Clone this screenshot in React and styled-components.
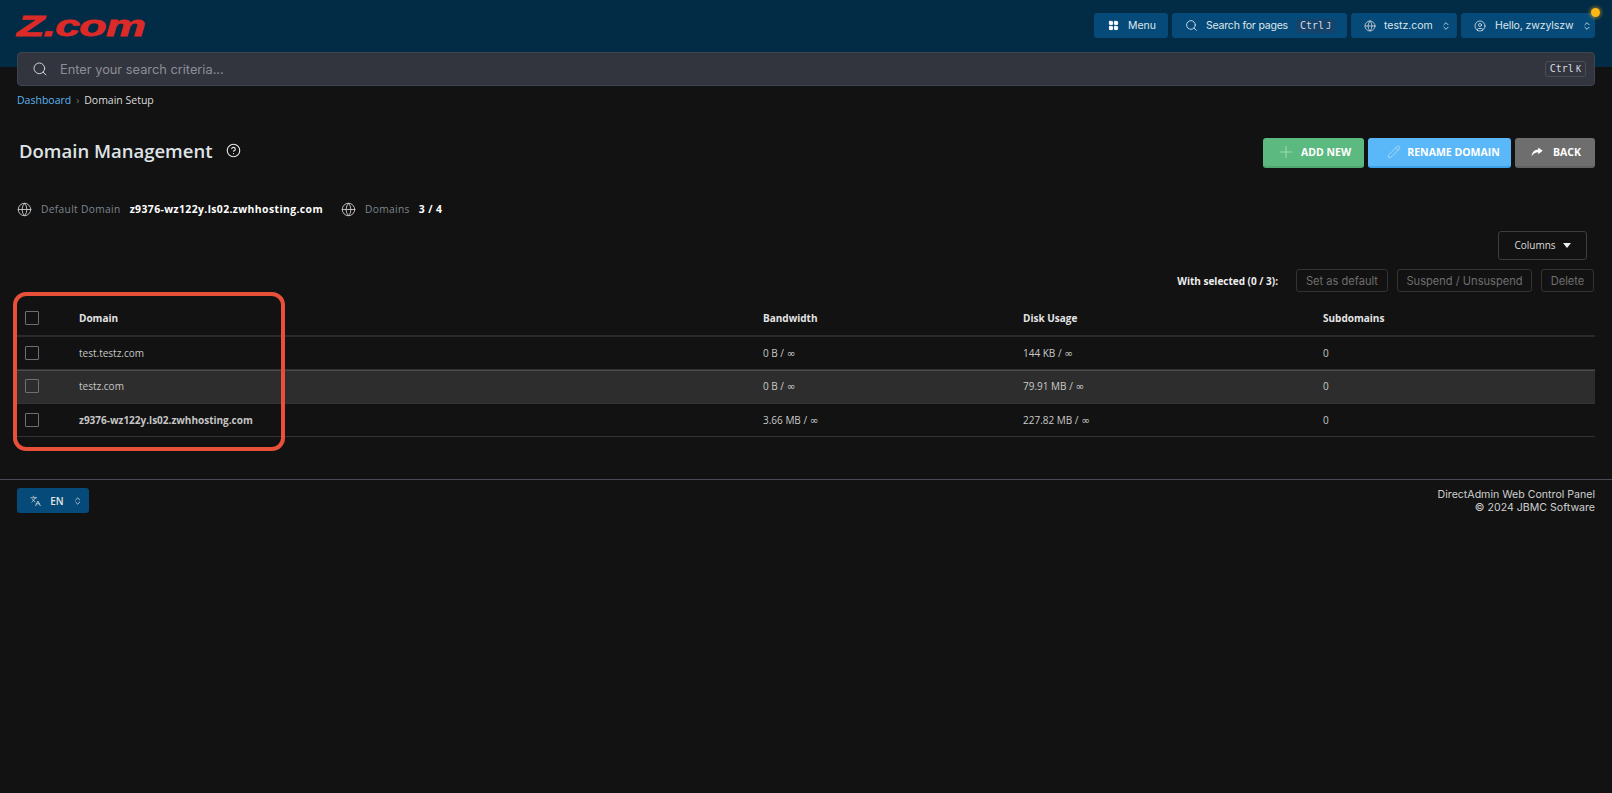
import React from "react";
import styled, { createGlobalStyle } from "styled-components";
import { LayoutGrid, Search, Globe, CircleUser, ChevronsUpDown, Plus, Pencil, CircleHelp, Languages } from "lucide-react";

const GlobalStyle = createGlobalStyle`
  html, body { margin: 0; padding: 0; background: #121212; }
  body { font-family: "Open Sans", sans-serif; color: #e4e4e4; }
  * { box-sizing: border-box; }
`;

const Page = styled.div`
  position: relative;
  min-height: 793px;
  background: #121212;
`;

const HeaderBand = styled.header`
  height: 67px;
  background: #022b46;
  padding: 13px 17px 0;
  display: flex;
  justify-content: space-between;
  align-items: flex-start;
`;

const Logo = styled.div`
  font-family: "Liberation Sans", sans-serif;
  font-weight: 700;
  font-style: italic;
  font-size: 30px;
  line-height: 26px;
  letter-spacing: -0.5px;
  color: #db2a27;
  transform: scaleX(1.49);
  transform-origin: left center;
  -webkit-text-stroke: 0.8px #db2a27;
`;

const TopNav = styled.nav`
  position: relative;
  display: flex;
  gap: 4px;
`;

const NavButton = styled.div`
  height: 25px;
  width: ${(p) => p.$w}px;
  padding: 0 7px 0 ${(p) => p.$pl || 13}px;
  display: flex;
  align-items: center;
  gap: ${(p) => p.$gap || 9}px;
  background: #054a78;
  border-radius: 3px;
  font-size: 10.5px;
  color: #dfe6ec;
  font-family: "Inter", sans-serif;
  white-space: nowrap;
  svg { flex: none; }
`;

const NavLabel = styled.span`
  letter-spacing: ${(p) => p.$spacing || 0}px;
`;

const Kbd = styled.span`
  font-family: "DejaVu Sans Mono", monospace;
  font-size: 10px;
  color: #d5dae0;
  background: ${(p) => p.$bg || "#15436a"};
  border: ${(p) => (p.$outlined ? "1px solid #494d57" : "none")};
  border-radius: 3px;
  padding: 2px 4px;
  line-height: 10px;
  small { font-size: 8.5px; margin-left: 2px; }
`;

const Updown = styled(ChevronsUpDown)`
  margin-left: auto;
`;

const NotifyDot = styled.span`
  position: absolute;
  top: -5px;
  right: -5px;
  width: 9px;
  height: 9px;
  border-radius: 50%;
  background: #fdb813;
  box-shadow: 0 0 3px 2px rgba(253, 184, 19, 0.35);
`;

const SearchBar = styled.div`
  margin: -15px 17px 0;
  position: relative;
  height: 34px;
  background: #32353e;
  border: 1px solid #3d4450;
  border-radius: 4px;
  display: flex;
  align-items: center;
  padding: 0 8px 0 14px;
  gap: 12px;
  font-family: "Inter", sans-serif;
  font-size: 12.8px;
  color: #8b8f98;
`;

const SearchHint = styled.span`
  flex: 1;
`;

const Crumbs = styled.div`
  margin: 7px 17px 0;
  display: flex;
  align-items: center;
  gap: 5px;
  font-size: 10.5px;
  height: 14px;
  color: #dcdcdc;
`;

const CrumbLink = styled.span`
  color: #5ab4f0;
`;

const CrumbSep = styled.span`
  color: #777;
  font-size: 10px;
`;

const TitleRow = styled.div`
  margin: 31px 17px 0;
  height: 30px;
  display: flex;
  justify-content: space-between;
  align-items: center;
`;

const TitleGroup = styled.div`
  display: flex;
  align-items: center;
  gap: 13px;
  padding: 0 0 6px 2px;
`;

const Title = styled.h1`
  margin: 0;
  font-size: 18.5px;
  font-weight: 600;
  color: #dfe3e6;
`;

const ActionGroup = styled.div`
  display: flex;
  gap: 4px;
`;

const ActionButton = styled.div`
  height: 30px;
  width: ${(p) => p.$w}px;
  padding-left: ${(p) => p.$pl || 0}px;
  background: ${(p) => p.$bg};
  border-bottom: 2px solid ${(p) => p.$edge};
  border-radius: 3px;
  display: flex;
  align-items: center;
  justify-content: center;
  gap: ${(p) => p.$gap || 10}px;
  font-size: 10.5px;
  font-weight: 700;
  color: #fff;
  white-space: nowrap;
`;

const InfoRow = styled.div`
  margin: 33px 17px 0;
  height: 16px;
  display: flex;
  align-items: center;
  font-size: 10.2px;
`;

const InfoLabel = styled.span`
  color: #7d8790;
  margin: 0 9px;
  letter-spacing: 0.35px;
`;

const InfoValue = styled.span`
  color: #fff;
  font-weight: 700;
  font-size: 10.4px;
  margin-right: ${(p) => p.$mr || 0}px;
  letter-spacing: 0.4px;
`;

const ColumnsRow = styled.div`
  margin: 14px 17px 0;
  display: flex;
  justify-content: flex-end;
  padding-right: 8px;
`;

const ColumnsButton = styled.div`
  width: 89px;
  height: 29px;
  padding-bottom: 1px;
  border: 1px solid #3e3e3e;
  border-radius: 3px;
  display: flex;
  align-items: center;
  justify-content: center;
  gap: 7px;
  font-size: 10px;
  color: #dcdcdc;
`;

const Caret = styled.span`
  width: 0;
  height: 0;
  border-left: 4.5px solid transparent;
  border-right: 4.5px solid transparent;
  border-top: 5px solid #eee;
`;

const BulkRow = styled.div`
  margin: 9px 17px 0;
  display: flex;
  justify-content: flex-end;
  align-items: center;
  gap: 9px;
  padding-right: 1px;
`;

const BulkLabel = styled.span`
  font-size: 10px;
  font-weight: 700;
  color: #eee;
  margin-right: 9px;
`;

const BulkButton = styled.div`
  height: 23px;
  width: ${(p) => p.$w}px;
  border: 1px solid #333;
  border-radius: 3px;
  display: flex;
  align-items: center;
  justify-content: center;
  font-size: 11.1px;
  color: #6f6f6f;
  font-family: "Inter", sans-serif;
`;

const Table = styled.div`
  margin: 9px 17px 0;
`;

const Row = styled.div`
  display: grid;
  grid-template-columns: 62px 684px 260px 300px 1fr;
  align-items: center;
  height: ${(p) => p.$h || 33}px;
  padding-bottom: ${(p) => p.$pb || 0}px;
  border-bottom: ${(p) => (p.$thick ? "2px solid #2a2a2a" : "1px solid #333")};
  background: ${(p) => (p.$hover ? "#2d2d2d" : "transparent")};
  ${(p) => p.$hover && "border-top: 1px solid #4a4a4a;"}
`;

const CheckCell = styled.div`
  padding-left: 8px;
  display: flex;
`;

const Check = styled.span`
  width: 14px;
  height: 14px;
  border: 1px solid #6b7078;
  border-radius: 1px;
`;

const HeadCell = styled.div`
  font-size: 10px;
  font-weight: 700;
  color: #e4e4e4;
`;

const DomainCell = styled.div`
  font-size: 10px;
  color: #c6c6c6;
  font-weight: ${(p) => (p.$bold ? 700 : 400)};
`;

const Cell = styled.div`
  font-size: 10px;
  color: #c9c9c9;
`;

const Inf = styled.span`
  font-family: "DejaVu Sans", sans-serif;
  font-size: 10.5px;
`;

const Highlight = styled.div`
  position: absolute;
  left: 13px;
  top: 292px;
  width: 272px;
  height: 159px;
  border: 4px solid #e8503a;
  border-radius: 13px;
  pointer-events: none;
`;

const Footer = styled.footer`
  margin: 42px 0 0;
  border-top: 1px solid #4a4a55;
  padding: 8px 17px 0;
  display: flex;
  justify-content: space-between;
  align-items: flex-start;
`;

const LangButton = styled.div`
  width: 72px;
  height: 25px;
  background: #054a78;
  border-radius: 3px;
  display: flex;
  align-items: center;
  padding: 0 7px 0 13px;
  gap: 9px;
  font-size: 10px;
  font-weight: 600;
  color: #e6e6e6;
`;

const Copy = styled.div`
  text-align: right;
  font-family: "Inter", sans-serif;
  font-size: 10.6px;
  line-height: 12.5px;
  padding-top: 1px;
  color: #cfcfcf;
`;

// filled "share" arrow of the back button
const BackArrow = () => (
  <svg width="12" height="10" viewBox="0 0 14 12" fill="#fff">
    <path d="M8.5 0.5 L13.8 4.6 L8.5 8.7 V6.2 C5 6.2 2.6 7.6 0.6 11 C1 6.5 3.6 3.2 8.5 3 Z" />
  </svg>
);

const rows = [
  { name: "test.testz.com", bw: "0 B / ", disk: "144 KB / " },
  { name: "testz.com", bw: "0 B / ", disk: "79.91 MB / ", hover: true },
  { name: "z9376-wz122y.ls02.zwhhosting.com", bw: "3.66 MB / ", disk: "227.82 MB / ", bold: true },
];

export default function App() {
  return (
    <Page>
      <GlobalStyle />
      <HeaderBand>
        <Logo>Z.com</Logo>
        <TopNav>
          <NavButton $w={74} $pl={14}>
            <LayoutGrid size={11} fill="#fff" color="#fff" />
            Menu
          </NavButton>
          <NavButton $w={175} $gap={8}>
            <Search size={13} strokeWidth={1.6} />
            <NavLabel $spacing={-0.2}>Search for pages</NavLabel>
            <Kbd>Ctrl<small>J</small></Kbd>
          </NavButton>
          <NavButton $w={106} $gap={8}>
            <Globe size={12} strokeWidth={1.6} color="#d5d5d5" />
            testz.com
            <Updown size={10} />
          </NavButton>
          <NavButton $w={134}>
            <CircleUser size={12} strokeWidth={1.6} />
            <NavLabel $spacing={-0.1}>Hello, zwzylszw</NavLabel>
            <Updown size={10} />
          </NavButton>
          <NotifyDot />
        </TopNav>
      </HeaderBand>

      <SearchBar>
        <Search size={16} strokeWidth={1.5} color="#d0d3d8" />
        <SearchHint>Enter your search criteria...</SearchHint>
        <Kbd $outlined $bg="transparent">Ctrl<small>K</small></Kbd>
      </SearchBar>

      <Crumbs>
        <CrumbLink>Dashboard</CrumbLink>
        <CrumbSep>›</CrumbSep>
        Domain Setup
      </Crumbs>

      <TitleRow>
        <TitleGroup>
          <Title>Domain Management</Title>
          <CircleHelp size={15} strokeWidth={1.8} color="#e4e4e4" />
        </TitleGroup>
        <ActionGroup>
          <ActionButton $w={101} $bg="#5cb97f" $edge="#4ea870" $gap={5}>
            <Plus size={20} strokeWidth={1.1} color="#a5dcb9" />
            ADD NEW
          </ActionButton>
          <ActionButton $w={143} $bg="#5ab8f8" $edge="#3ba2ea" $gap={6} $pl={8}>
            <Pencil size={14} strokeWidth={1.6} color="#a5d8fb" />
            RENAME DOMAIN
          </ActionButton>
          <ActionButton $w={80} $bg="#6e6e6e" $edge="#626262" $pl={2}>
            <BackArrow />
            BACK
          </ActionButton>
        </ActionGroup>
      </TitleRow>

      <InfoRow>
        <Globe size={15} strokeWidth={1.4} color="#cfcfcf" />
        <InfoLabel>Default Domain</InfoLabel>
        <InfoValue $mr={18}>z9376-wz122y.ls02.zwhhosting.com</InfoValue>
        <Globe size={15} strokeWidth={1.4} color="#cfcfcf" />
        <InfoLabel>Domains</InfoLabel>
        <InfoValue>3 / 4</InfoValue>
      </InfoRow>

      <ColumnsRow>
        <ColumnsButton>
          Columns
          <Caret />
        </ColumnsButton>
      </ColumnsRow>

      <BulkRow>
        <BulkLabel>With selected (0 / 3):</BulkLabel>
        <BulkButton $w={92}>Set as default</BulkButton>
        <BulkButton $w={135}>Suspend / Unsuspend</BulkButton>
        <BulkButton $w={53}>Delete</BulkButton>
      </BulkRow>

      <Table>
        <Row $h={36} $thick>
          <CheckCell><Check /></CheckCell>
          <HeadCell>Domain</HeadCell>
          <HeadCell>Bandwidth</HeadCell>
          <HeadCell>Disk Usage</HeadCell>
          <HeadCell>Subdomains</HeadCell>
        </Row>
        {rows.map((r) => (
          <Row key={r.name} $hover={r.hover} $h={r.hover ? 34 : 33} $pb={r.hover ? 2 : 1}>
            <CheckCell><Check /></CheckCell>
            <DomainCell $bold={r.bold}>{r.name}</DomainCell>
            <Cell>{r.bw}<Inf>∞</Inf></Cell>
            <Cell>{r.disk}<Inf>∞</Inf></Cell>
            <Cell>0</Cell>
          </Row>
        ))}
      </Table>

      <Footer>
        <LangButton>
          <Languages size={12} strokeWidth={1.6} />
          EN
          <Updown size={10} />
        </LangButton>
        <Copy>
          DirectAdmin Web Control Panel
          <br />© 2024 JBMC Software
        </Copy>
      </Footer>

      <Highlight />
    </Page>
  );
}
